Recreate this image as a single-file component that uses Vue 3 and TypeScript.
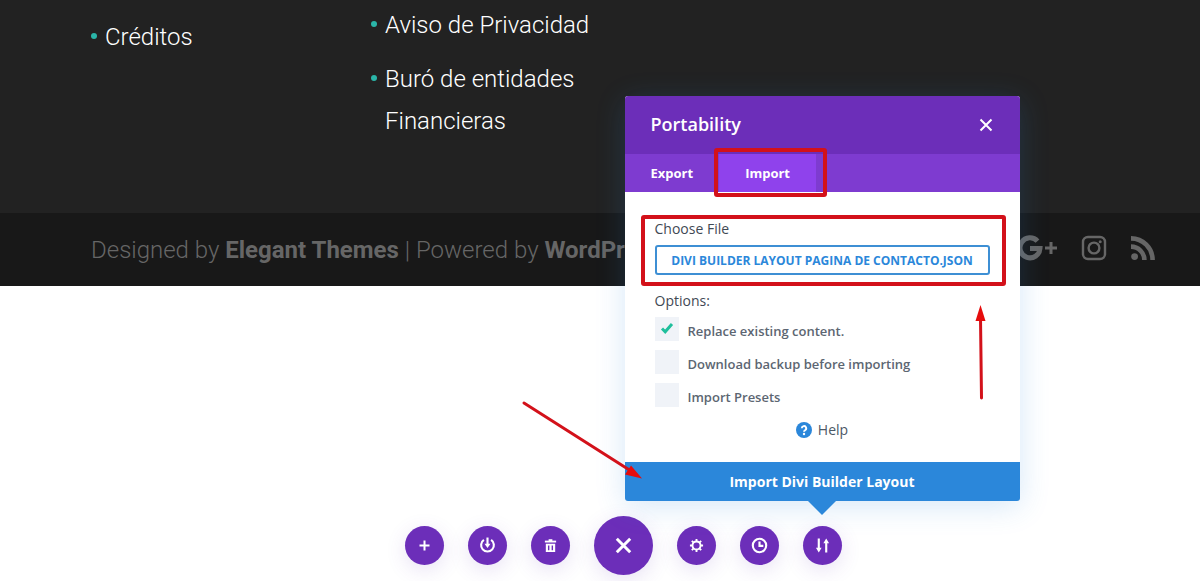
<script setup lang="ts">
import { ref } from 'vue'

interface Option {
  id: string
  label: string
  checked: boolean
}

const activeTab = ref<'Export' | 'Import'>('Import')
const tabs = ['Export', 'Import'] as const
const options = ref<Option[]>([
  { id: 'replace', label: 'Replace existing content.', checked: true },
  { id: 'backup', label: 'Download backup before importing', checked: false },
  { id: 'presets', label: 'Import Presets', checked: false },
])
</script>

<template>
  <div class="page">
    <footer>
      <div class="widgets">
        <ul class="links first">
          <li><a href="#">Créditos</a></li>
        </ul>
        <ul class="links">
          <li><a href="#">Aviso de Privacidad</a></li>
          <li><a href="#">Buró de entidades Financieras</a></li>
        </ul>
      </div>
      <div class="bottom-bar">
        <p class="credits">
          Designed by <a href="#">Elegant Themes</a> | Powered by <a href="#">WordPress</a>
        </p>
        <nav class="social" aria-label="Social">
          <a href="#" aria-label="Google Plus">
            <svg width="42" height="26" viewBox="0 0 42 26">
              <path d="M21.5 6.2A10 10 0 1 0 24 13.4H14" fill="none" stroke="currentColor" stroke-width="5" />
              <path d="M35 7v12M29 13h12" stroke="currentColor" stroke-width="3" />
            </svg>
          </a>
          <a href="#" aria-label="Instagram">
            <svg width="26" height="26" viewBox="0 0 26 26" fill="none" stroke="currentColor" stroke-width="2.4">
              <rect x="2" y="2" width="22" height="22" rx="5" />
              <circle cx="13" cy="13" r="5.4" />
              <circle cx="19.2" cy="6.8" r="1.5" fill="currentColor" stroke="none" />
            </svg>
          </a>
          <a href="#" aria-label="RSS">
            <svg width="26" height="26" viewBox="0 0 26 26" fill="none" stroke="currentColor" stroke-width="4.6">
              <circle cx="4.6" cy="21.6" r="3.4" fill="currentColor" stroke="none" />
              <path d="M1 11.6A13.4 13.4 0 0 1 14.4 25M1 3.4A21.6 21.6 0 0 1 22.6 25" />
            </svg>
          </a>
        </nav>
      </div>
    </footer>

    <div class="toolbar">
      <button type="button" aria-label="Add from library">
        <svg width="17" height="17" viewBox="0 0 17 17"><path d="M8.5 3.500v10M3.500 8.500h10" /></svg>
      </button>
      <button type="button" aria-label="Save to library">
        <svg width="17" height="17" viewBox="0 0 16 16">
          <path d="M4.6 2.7a6 6 0 1 0 6.8 0" />
          <path d="M8 .5V7" />
          <path d="M5.2 6.4h5.6L8 10.4z" class="solid" />
        </svg>
      </button>
      <button type="button" aria-label="Clear layout">
        <svg width="15" height="15" viewBox="0 0 16 16">
          <path d="M2 3.8h12" />
          <path d="M6 1.3h4v2H6z" class="solid" />
          <path fill-rule="evenodd" d="M3 6h10v9H3zM5.3 8v5h1.5V8zM9.2 8v5h1.5V8z" class="solid" />
        </svg>
      </button>
      <button type="button" class="main" aria-label="Close toolbar">
        <svg width="19" height="19" viewBox="0 0 19 19"><path d="M2.800 2.800l13.400 13.400M16.200 2.800L2.800 16.200" /></svg>
      </button>
      <button type="button" aria-label="Page settings">
        <svg width="15" height="15" viewBox="0 0 16 16">
          <circle cx="8" cy="8" r="4.300" />
          <path d="M8 1v2.6M8 12.4V15M1 8h2.6M12.4 8H15M3 3l2 2M11 11l2 2M13 3l-2 2M5 11l-2 2" />
        </svg>
      </button>
      <button type="button" aria-label="Editing history">
        <svg width="17" height="17" viewBox="0 0 16 16">
          <circle cx="8" cy="8" r="6.3" />
          <path d="M8 4.2v4.2h3.6" />
        </svg>
      </button>
      <div class="portability">
        <button type="button" aria-label="Portability">
          <svg width="17" height="17" viewBox="0 0 16 16">
            <path d="M4.5 1.5V11M11.5 14.5V5" />
            <path d="M1.8 10.2h5.4L4.5 14.5zM8.8 5.8h5.4L11.5 1.5z" class="solid" />
          </svg>
        </button>

        <section class="modal" role="dialog" aria-labelledby="modal-title">
          <header>
            <h2 id="modal-title">Portability</h2>
            <button type="button" class="close" aria-label="Close">
              <svg width="16" height="16" viewBox="0 0 16 16"><path d="M2.5 2.5l11 11M13.5 2.5l-11 11" /></svg>
            </button>
          </header>
          <div class="tabs" role="tablist">
            <button
              v-for="tab in tabs"
              :key="tab"
              type="button"
              role="tab"
              :aria-selected="activeTab === tab"
              :class="{ active: activeTab === tab }"
              @click="activeTab = tab"
            >{{ tab }}</button>
          </div>
          <div class="body">
            <p class="caption">Choose File</p>
            <button type="button" class="file">DIVI BUILDER LAYOUT PAGINA DE CONTACTO.JSON</button>
            <p class="caption options-caption">Options:</p>
            <div class="options">
              <label v-for="option in options" :key="option.id" :for="option.id">
                <span class="box">
                  <input :id="option.id" v-model="option.checked" type="checkbox" />
                  <svg v-if="option.checked" width="14" height="14" viewBox="0 0 14 14"><path d="M2 6.5l3.2 3.2L12 2" /></svg>
                </span>
                <span>{{ option.label }}</span>
              </label>
            </div>
            <a href="#" class="help">
              <svg width="16" height="16" viewBox="0 0 16 16">
                <circle cx="8" cy="8" r="8" fill="#2b87da" />
                <path d="M5.8 6.3a2.2 2.2 0 1 1 3.3 1.9c-.8.5-1.1.8-1.1 1.5" fill="none" stroke="#fff" stroke-width="1.9" />
                <circle cx="8" cy="12" r="1.2" fill="#fff" />
              </svg>
              Help
            </a>
          </div>
          <button type="button" class="submit">Import Divi Builder Layout</button>

          <svg class="marks" width="395" height="405" viewBox="0 0 395 405" aria-hidden="true">
            <rect x="91" y="54" width="109" height="45" rx="1" class="frame" />
            <rect x="18" y="121" width="361" height="67" rx="1" class="frame" />
            <path d="M356.500 302L355.500 222M-101 307L6 375" stroke-linecap="round" />
            <path d="M355.500 209l5 16h-10zM17 382.500l-17-4 6-9z" class="tip" />
          </svg>
        </section>
      </div>
    </div>
  </div>
</template>

<style>
body {
  margin: 0;
  background: #fff;
}
</style>

<style scoped>
* {
  box-sizing: border-box;
}

.page {
  position: relative;
  min-height: 100vh;
  overflow: hidden;
  font-family: Roboto, "Liberation Sans", sans-serif;
  font-weight: 300;
  font-size: 24px;
}

button {
  border: 0;
  margin: 0;
  padding: 0;
  cursor: pointer;
  font-family: "Open Sans", "Noto Sans", sans-serif;
}

a {
  color: inherit;
  text-decoration: none;
}

p,
h2 {
  margin: 0;
}

footer {
  background: #222;
}

.widgets {
  display: flex;
  min-height: 213px;
  padding: 4px 44px 0 91px;
  color: #fff;
  line-height: 42px;
}

.links {
  display: flex;
  flex-direction: column;
  gap: 12px;
  width: 240px;
  margin: 0;
  padding: 0;
  list-style: none;
}

.links.first {
  width: 280px;
  padding-top: 12px;
}

.links li {
  position: relative;
  padding-left: 14px;
}

.links li::before {
  content: "";
  position: absolute;
  left: 0;
  top: 17px;
  width: 6px;
  height: 6px;
  border-radius: 50%;
  background: #2ab5a8;
}

.bottom-bar {
  display: flex;
  align-items: center;
  justify-content: space-between;
  height: 73px;
  padding: 0 44px 0 91px;
  background: #181818;
  color: #666;
}

.credits a {
  font-weight: 700;
}

.social {
  display: flex;
  gap: 23px;
  padding-bottom: 4px;
}

.social svg {
  display: block;
}

.toolbar {
  position: absolute;
  left: 47px;
  right: 0;
  bottom: 6px;
  display: flex;
  align-items: center;
  justify-content: center;
  gap: 24px;
}

.toolbar > button,
.portability > button {
  display: flex;
  align-items: center;
  justify-content: center;
  width: 39px;
  height: 39px;
  border-radius: 50%;
  background: #6c2eb9;
  box-shadow: 0 5px 20px rgba(103, 58, 183, 0.15);
}

.toolbar > .main {
  width: 59px;
  height: 59px;
}

.toolbar button svg {
  fill: none;
  stroke: #fff;
  stroke-width: 2;
}

.toolbar .main svg {
  stroke-width: 3;
}

.toolbar .solid {
  fill: #fff;
  stroke: none;
}

.portability {
  position: relative;
}

.modal {
  position: absolute;
  bottom: calc(100% + 25px);
  left: 50%;
  width: 395px;
  margin-left: -198px;
  border-radius: 3px;
  background: #fff;
  box-shadow: 0 5px 30px rgba(43, 135, 218, 0.2);
  color: #4c5866;
  font-family: "Open Sans", "Noto Sans", sans-serif;
  font-weight: 600;
  font-size: 13px;
}

.modal::after {
  content: "";
  position: absolute;
  top: 100%;
  left: 50%;
  margin-left: -14px;
  border: 14px solid transparent;
  border-top-color: #2b87da;
  border-bottom: 0;
}

header {
  display: flex;
  align-items: center;
  justify-content: space-between;
  height: 58px;
  padding: 0 26px;
  border-radius: 3px 3px 0 0;
  background: #6c2eb9;
  color: #fff;
}

h2 {
  padding-bottom: 2px;
  font-weight: 600;
  font-size: 18px;
}

.close {
  display: flex;
  background: none;
}

.tabs {
  display: flex;
  height: 38px;
  background: #7e3bd0;
}

.tabs button {
  padding: 0 26px;
  background: none;
  color: #fff;
  font-weight: 700;
  font-size: 13px;
}

.tabs .active {
  background: #8f42ec;
}

.body {
  display: flex;
  flex-direction: column;
  padding: 27px 30px 22px;
}

.caption {
  color: #3f4954;
  font-weight: 500;
  font-size: 14px;
  line-height: 20px;
}

.file {
  height: 30px;
  margin-top: 6px;
  border: 2px solid #3d8fd4;
  border-radius: 3px;
  background: #fff;
  color: #2b87da;
  font-weight: 700;
  font-size: 12px;
  white-space: nowrap;
}

.options-caption {
  margin-top: 16px;
}

.options {
  display: flex;
  flex-direction: column;
  gap: 8px;
  margin-top: 6px;
  color: #5c6672;
}

.options label {
  display: flex;
  gap: 9px;
  line-height: 28px;
  height: 25px;
}

.box {
  display: grid;
  place-items: center;
  width: 24px;
  height: 24px;
  background: #f0f3f8;
}

.box > * {
  grid-area: 1 / 1;
}

.box input {
  appearance: none;
  width: 24px;
  height: 24px;
  margin: 0;
}

.box svg {
  fill: none;
  stroke: #1fbf9c;
  stroke-width: 3;
  pointer-events: none;
}

.help {
  display: flex;
  align-items: center;
  justify-content: center;
  gap: 6px;
  margin-top: 12px;
  font-weight: 500;
  font-size: 14px;
  line-height: 20px;
}

.submit {
  display: block;
  width: 100%;
  height: 39px;
  border-radius: 0 0 3px 3px;
  background: #2b87da;
  color: #fff;
  font-weight: 700;
  font-size: 14px;
}

.marks {
  position: absolute;
  top: 0;
  left: 0;
  overflow: visible;
  fill: none;
  stroke: #d3111a;
  stroke-width: 3;
  pointer-events: none;
}

.marks .frame {
  stroke-width: 4;
}

.marks .tip {
  fill: #e60c0c;
  stroke: none;
}
</style>
